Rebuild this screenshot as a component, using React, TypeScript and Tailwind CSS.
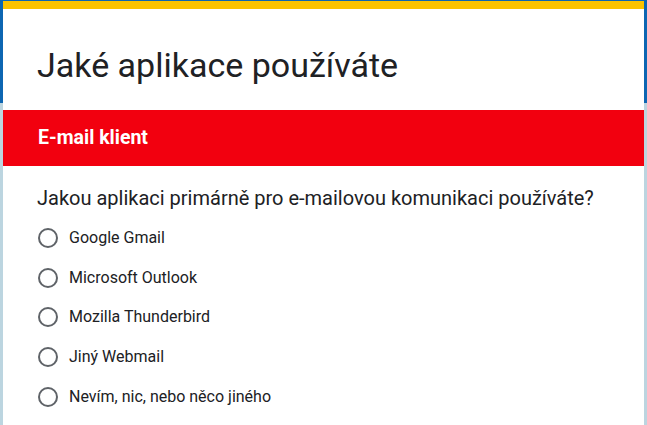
import React from "react";

const options = [
  "Google Gmail",
  "Microsoft Outlook",
  "Mozilla Thunderbird",
  "Jiný Webmail",
  "Nevím, nic, nebo něco jiného",
];

export default function App() {
  return (
    <div
      className="w-[647px] h-[425px] overflow-hidden px-[3px] pt-[1px] bg-[linear-gradient(to_bottom,#0d66b2_0px,#0d66b2_103px,#bcd5e0_103px,#bcd5e0_100%)]"
      style={{ fontFamily: "Roboto, 'Liberation Sans', sans-serif" }}
    >
      <div className="bg-white h-full flex flex-col">
        <div className="h-[8px] bg-[#fcc300]" />
        <div className="h-[101px] flex items-center pl-[34px] pt-[10px]">
          <h1 className="text-[34px] leading-none text-[#202124]">Jaké aplikace používáte</h1>
        </div>
        <div className="h-[56px] bg-[#f2000f] flex items-center pl-[35px]">
          <span className="text-white font-bold text-[19.5px]">E-mail klient</span>
        </div>
        <div className="pl-[34px] pt-[20px]">
          <div className="text-[20px] leading-[24px] text-[#202124]">
            Jakou aplikaci primárně pro e-mailovou komunikaci používáte?
          </div>
          <div className="flex flex-col mt-[8px] pl-[1px]">
            {options.map((o) => (
              <div key={o} className="h-[39.8px] flex items-center">
                <div className="w-[20px] h-[20px] rounded-full border-2 border-[#5f6368]" />
                <span className="ml-[11px] text-[16px] text-[#202124]">{o}</span>
              </div>
            ))}
          </div>
        </div>
      </div>
    </div>
  );
}
